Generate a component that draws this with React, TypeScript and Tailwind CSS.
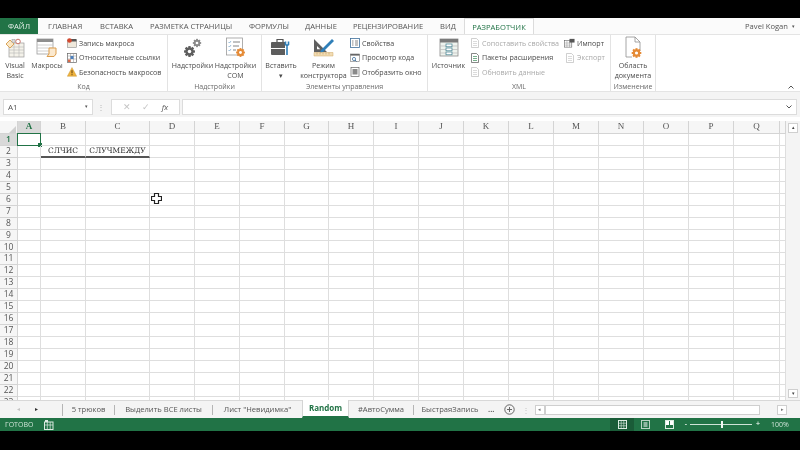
import React from "react";

const colWidths = [18, 23, 45, 64, 45, 45, 45, 44, 45, 45, 45, 45, 45, 45, 45, 45, 45, 46, 6];
const colNames = ["A","B","C","D","E","F","G","H","I","J","K","L","M","N","O","P","Q",""];
const rows = Array.from({ length: 23 }, (_, i) => i + 1);

const IVB = () => (
  <svg width="20" height="20" viewBox="0 0 20 20">
    <rect x="4" y="5" width="15" height="14" fill="#f4f2ea" stroke="#9a9a9a" strokeWidth=".7" />
    <path d="M4 9h15M4 12h15M4 15h15M9 5v14M14 5v14" stroke="#b5b5b5" strokeWidth=".6" />
    <path d="M1 6l4-4 4 4-4 4z" fill="#fbe7c4" stroke="#d9a55c" strokeWidth="1" />
    <circle cx="13" cy="3.5" r="2.3" fill="#fff" stroke="#c9736a" strokeWidth="1" />
    <rect x="7" y="1.5" width="3" height="3" fill="#ddd" stroke="#999" strokeWidth=".5" />
  </svg>
);
const IMacros = () => (
  <svg width="22" height="20" viewBox="0 0 22 20">
    <rect x="1" y="1" width="16" height="15" fill="#fff" stroke="#9c9c9c" strokeWidth=".8" />
    <rect x="1" y="1" width="16" height="3" fill="#8e8e8e" />
    <path d="M1 7h16M1 10h16M1 13h16" stroke="#c4c4c4" strokeWidth=".8" />
    <path d="M13 10h7v6l-2 2.5h-7l2-2.5z" fill="#fbe9cf" stroke="#dc9d4c" strokeWidth="1" />
  </svg>
);
const IRec = () => (
  <svg width="10" height="10" viewBox="0 0 10 10">
    <rect x="0.5" y="2" width="9" height="7.5" fill="#efe9dc" stroke="#8c8c8c" strokeWidth=".6" />
    <rect x="4" y="1" width="5.5" height="2.5" fill="#555" />
    <circle cx="2.5" cy="2.5" r="2.3" fill="#d4492f" />
  </svg>
);
const IRel = () => (
  <svg width="10" height="10" viewBox="0 0 10 10">
    <rect x="0.5" y="0.5" width="9" height="9" fill="#fff" stroke="#666" strokeWidth=".7" />
    <path d="M.5 3h9M.5 6h9M3.5 .5v9M6.5 .5v9" stroke="#8f8f8f" strokeWidth=".5" />
    <rect x="3.5" y="3" width="3" height="3" fill="#4f81bd" />
    <rect x="1" y="6.5" width="2.5" height="2.5" fill="#d9694a" />
  </svg>
);
const IWarn = () => (
  <svg width="10" height="10" viewBox="0 0 10 10">
    <path d="M5 .5l4.7 8.8H.3z" fill="#eeb23e" stroke="#c68f2a" strokeWidth=".4" />
    <path d="M5 3.2v3.2M5 7.2v1" stroke="#5b3d10" strokeWidth="1" />
  </svg>
);
const Gear = ({ cx, cy, r, color }: { cx: number; cy: number; r: number; color: string }) => (
  <g>
    {[0, 45, 90, 135].map((a) => (
      <rect key={a} x={cx - r * 0.28} y={cy - r * 1.3} width={r * 0.56} height={r * 2.6} fill={color} transform={`rotate(${a} ${cx} ${cy})`} />
    ))}
    <circle cx={cx} cy={cy} r={r} fill={color} />
    <circle cx={cx} cy={cy} r={r * 0.42} fill="#fff" />
  </g>
);
const IAddins = () => (
  <svg width="22" height="22" viewBox="0 0 22 22">
    <Gear cx={15} cy={6} r={3.2} color="#8a8a8a" />
    <Gear cx={7.5} cy={14.5} r={4.2} color="#5e5e5e" />
  </svg>
);
const ICom = () => (
  <svg width="22" height="22" viewBox="0 0 22 22">
    <rect x="1.5" y="1" width="16" height="17" fill="#fff" stroke="#9b9b9b" strokeWidth=".8" />
    <path d="M3.5 5l1 1 1.5-2M3.5 9l1 1 1.5-2M3.5 13l1 1 1.5-2" stroke="#6fa0c8" strokeWidth=".7" fill="none" />
    <path d="M8 5h7M8 9h6M8 13h3" stroke="#777" strokeWidth=".9" />
    <Gear cx={15.5} cy={15.5} r={3.4} color="#e58a35" />
  </svg>
);
const IInsert = () => (
  <svg width="22" height="20" viewBox="0 0 22 20">
    <path d="M7 4V1.5h6V4" fill="none" stroke="#555" strokeWidth="1.2" />
    <rect x="1" y="4" width="18" height="13" rx="1" fill="#5d5d5d" />
    <rect x="1" y="10" width="18" height="1" fill="#fff" />
    <path d="M17 3v14" stroke="#fff" strokeWidth="4" />
    <path d="M15.5 3.5v3l1.5 1v9.5M18.5 3.5v3l-1.5 1" stroke="#2f7fb8" strokeWidth="1.6" fill="none" />
  </svg>
);
const IDesign = () => (
  <svg width="24" height="22" viewBox="0 0 24 22">
    <path d="M2 2l13 13H2zM5 9v3.3h3.3z" fill="#5f5f5f" fillRule="evenodd" />
    <path d="M9 13L20 2l2 2L11 15l-3 1z" fill="#2f7fb8" />
    <path d="M2 15.5h19v3.5H2z" fill="#f1dcb4" stroke="#d0a867" strokeWidth=".5" />
    <path d="M5 15.5v2M8 15.5v2M11 15.5v2M14 15.5v2M17 15.5v2" stroke="#b98f4e" strokeWidth=".5" />
  </svg>
);
const IProps = () => (
  <svg width="10" height="10" viewBox="0 0 10 10">
    <rect x=".5" y=".5" width="9" height="9" fill="#fff" stroke="#3f6f9b" strokeWidth=".8" />
    <path d="M2 3h1.5M5 3h3M2 5h1.5M5 5h3M2 7h1.5M5 7h3" stroke="#555" strokeWidth=".7" />
  </svg>
);
const ICode = () => (
  <svg width="10" height="10" viewBox="0 0 10 10">
    <rect x=".5" y="1" width="9" height="7.5" fill="#fff" stroke="#777" strokeWidth=".6" />
    <rect x=".5" y="1" width="9" height="1.6" fill="#666" />
    <circle cx="4" cy="6" r="1.6" fill="none" stroke="#3f6f9b" strokeWidth=".8" />
    <path d="M5 7l1.6 1.6" stroke="#3f6f9b" strokeWidth=".9" />
  </svg>
);
const IDialog = () => (
  <svg width="10" height="10" viewBox="0 0 10 10">
    <rect x="1" y=".5" width="8" height="9" fill="#fff" stroke="#666" strokeWidth=".7" />
    <rect x="2.5" y="2" width="5" height="5.5" fill="#8a8a8a" />
  </svg>
);
const ISource = () => (
  <svg width="20" height="20" viewBox="0 0 20 20">
    <rect x="1" y="1" width="18" height="17" fill="#eef3ee" stroke="#8a8a8a" strokeWidth=".8" />
    <rect x="1" y="1" width="18" height="3.5" fill="#7a7a7a" />
    <path d="M1 8h18M1 11.5h18M1 15h18" stroke="#b9b9b9" strokeWidth=".7" />
    <rect x="7" y="6" width="6" height="2.8" fill="#fff" stroke="#3f7f8f" strokeWidth=".7" />
    <rect x="7" y="10" width="6" height="2.8" fill="#fff" stroke="#3f7f8f" strokeWidth=".7" />
    <rect x="7" y="14" width="6" height="2.8" fill="#fff" stroke="#3f7f8f" strokeWidth=".7" />
  </svg>
);
const ISmallDoc = ({ tone, accent }: { tone: string; accent: string }) => (
  <svg width="10" height="10" viewBox="0 0 10 10">
    <path d="M1.5 .5h5l2 2v7h-7z" fill="#fff" stroke={tone} strokeWidth=".7" />
    <path d="M3 3.5h4M3 5.5h4M3 7.5h4" stroke={accent} strokeWidth=".7" />
  </svg>
);
const IImport = () => (
  <svg width="12" height="10" viewBox="0 0 12 10">
    <rect x=".5" y="2.5" width="8" height="7" fill="#fff" stroke="#555" strokeWidth=".6" />
    <path d="M.5 5h8M.5 7.3h8M3.2 2.5v7M6 2.5v7" stroke="#888" strokeWidth=".5" />
    <rect x="6" y=".5" width="5.5" height="4" fill="#555" />
  </svg>
);
const IPane = () => (
  <svg width="20" height="24" viewBox="0 0 20 24">
    <path d="M3 1h9l5 5v9M3 1v20h6" fill="#fff" stroke="#8f8f8f" strokeWidth=".8" />
    <path d="M12 1v5h5" fill="none" stroke="#8f8f8f" strokeWidth=".8" />
    <Gear cx={13.5} cy={17} r={3.7} color="#e58a35" />
  </svg>
);

function Big({ w, icon, lines, ml }: { w: string; icon: React.ReactNode; lines: string[]; ml?: string }) {
  return (
    <div className={`${w} ${ml ?? ""} flex shrink-0 flex-col items-center`}>
      <div className="flex h-[25px] items-center justify-center">{icon}</div>
      <div className="whitespace-nowrap text-center leading-[10px]">
        {lines.map((l) => (
          <div key={l}>{l}</div>
        ))}
      </div>
    </div>
  );
}

function Small({ icon, label, dim }: { icon: React.ReactNode; label: string; dim?: boolean }) {
  return (
    <div className={`flex h-[14.5px] items-center gap-[2px] whitespace-nowrap ${dim ? "text-[#a9a9a9]" : ""}`}>
      <div className="flex w-[11px] justify-center">{icon}</div>
      <span>{label}</span>
    </div>
  );
}

function Group({ w, label, children }: { w: string; label: string; children: React.ReactNode }) {
  return (
    <div className={`${w} flex h-[56px] shrink-0 flex-col border-r border-[#e3e3e3]`}>
      <div className="flex h-[48px] items-start">{children}</div>
      <div className="text-center text-[7px] leading-[9px] text-[#6a6a6a]">{label}</div>
    </div>
  );
}

const tabs: [string, string][] = [
  ["ГЛАВНАЯ", "ml-[10px] w-[33px]"],
  ["ВСТАВКА", "ml-[19px] w-[32px]"],
  ["РАЗМЕТКА СТРАНИЦЫ", "ml-[18px] w-[81px]"],
  ["ФОРМУЛЫ", "ml-[18px] w-[38px]"],
  ["ДАННЫЕ", "ml-[18px] w-[30px]"],
  ["РЕЦЕНЗИРОВАНИЕ", "ml-[18px] w-[68px]"],
  ["ВИД", "ml-[19px] w-[15px]"],
];

function SheetTab({ label, w, divider = true }: { label: string; w: string; divider?: boolean }) {
  return (
    <div className={`${w} flex h-[10px] shrink-0 items-center justify-center whitespace-nowrap ${divider ? "border-r border-[#b5b5b5]" : ""}`}>
      {label}
    </div>
  );
}

export default function App() {
  return (
    <div
      className="flex h-[450px] w-[800px] flex-col overflow-hidden bg-black text-[7.6px] text-[#444] blur-[0.35px]"
      style={{ fontFamily: '"Open Sans", "Noto Sans", sans-serif' }}
    >
      <div className="h-[18px] shrink-0" />
      <div className="flex h-[413px] shrink-0 flex-col bg-[#f4f4f4]">
        {/* Tabs */}
        <div className="flex h-[16px] shrink-0 items-center bg-[#fbfbfb] pt-[1px] text-[#555]">
          <div className="-mt-[1px] flex h-[16px] w-[38px] items-center justify-center bg-[#217346] pt-[1px] text-[#e8f2ec]">ФАЙЛ</div>
          {tabs.map(([t, c]) => (
            <div key={t} className={`${c} whitespace-nowrap text-center`}>{t}</div>
          ))}
          <div className="-mt-[1px] ml-[9px] flex h-[17px] w-[70px] items-center justify-center self-start border-x border-t border-[#dcdcdc] bg-white pt-[1px] text-[#217346]">
            РАЗРАБОТЧИК
          </div>
          <div className="ml-auto mr-[5px] flex items-center gap-[4px] text-[#555]">
            <span>Pavel Kogan</span>
            <span className="text-[5px]">▾</span>
          </div>
        </div>

        {/* Ribbon */}
        <div className="flex h-[58px] shrink-0 border-y border-[#e4e4e4] bg-white text-[7.1px] text-[#4a4a4a]">
          <Group w="w-[168px]" label="Код">
            <Big w="w-[30px]" icon={<IVB />} lines={["Visual", "Basic"]} />
            <Big w="w-[34px]" icon={<IMacros />} lines={["Макросы"]} />
            <div className="ml-[2px] flex flex-col pt-[1px]">
              <Small icon={<IRec />} label="Запись макроса" />
              <Small icon={<IRel />} label="Относительные ссылки" />
              <Small icon={<IWarn />} label="Безопасность макросов" />
            </div>
          </Group>
          <Group w="w-[94px]" label="Надстройки">
            <Big w="w-[43px]" icon={<IAddins />} lines={["Надстройки"]} ml="ml-[3px]" />
            <Big w="w-[43px]" icon={<ICom />} lines={["Надстройки", "COM"]} />
          </Group>
          <Group w="w-[166px]" label="Элементы управления">
            <Big w="w-[38px]" icon={<IInsert />} lines={["Вставить", "▾"]} />
            <Big w="w-[47px]" icon={<IDesign />} lines={["Режим", "конструктора"]} />
            <div className="ml-[2px] flex flex-col pt-[1px]">
              <Small icon={<IProps />} label="Свойства" />
              <Small icon={<ICode />} label="Просмотр кода" />
              <Small icon={<IDialog />} label="Отобразить окно" />
            </div>
          </Group>
          <Group w="w-[183px]" label="XML">
            <Big w="w-[41px]" icon={<ISource />} lines={["Источник"]} />
            <div className="flex flex-col pt-[1px]">
              <Small dim icon={<ISmallDoc tone="#bbb" accent="#ccc" />} label="Сопоставить свойства" />
              <Small icon={<ISmallDoc tone="#555" accent="#3c8c5a" />} label="Пакеты расширения" />
              <Small dim icon={<ISmallDoc tone="#bbb" accent="#ccc" />} label="Обновить данные" />
            </div>
            <div className="ml-[5px] flex flex-col pt-[1px]">
              <Small icon={<IImport />} label="Импорт" />
              <Small dim icon={<ISmallDoc tone="#bbb" accent="#ccc" />} label="Экспорт" />
            </div>
          </Group>
          <Group w="w-[45px]" label="Изменение">
            <Big w="w-[44px]" icon={<IPane />} lines={["Область", "документа"]} />
          </Group>
          <div className="flex flex-1 items-end justify-end pb-[2px] pr-[6px] text-[6px]">
            <svg width="6" height="4" viewBox="0 0 6 4"><path d="M.5 3.5L3 1l2.5 2.5" stroke="#555" fill="none" /></svg>
          </div>
        </div>

        {/* Formula bar */}
        <div className="flex h-[25px] shrink-0 items-center bg-[#f4f4f4] pt-[5px] text-[#555]">
          <div className="ml-[3px] flex h-[16px] w-[90px] items-center justify-between border border-[#dcdcdc] bg-white px-[4px] text-[8px]">
            <span>A1</span>
            <span className="text-[5px]">▾</span>
          </div>
          <span className="ml-[4px] w-[8px] text-center text-[8px] text-[#b5b5b5]">⋮</span>
          <div className="ml-[6px] flex h-[16px] w-[69px] items-center justify-around border border-[#dcdcdc] bg-white px-[5px] text-[#c4c4c4]">
            <span className="text-[9px]">✕</span>
            <span className="text-[9px]">✓</span>
            <span className="text-[8px] italic text-[#555]">fx</span>
          </div>
          <div className="ml-[2px] flex h-[16px] flex-1 items-center justify-end border border-[#dcdcdc] bg-white pr-[4px]">
            <svg width="6" height="4" viewBox="0 0 6 4"><path d="M.5 .5L3 3l2.5-2.5" stroke="#555" fill="none" /></svg>
          </div>
          <div className="w-[3px]" />
        </div>

        {/* Sheet */}
        <div className="flex h-[283px] shrink-0 overflow-hidden bg-white pt-[4px]">
          <div className="w-[786px] shrink-0 overflow-hidden">
            <div className="flex h-[13px] bg-[#f6f6f6] text-[9px] text-[#555]" style={{ fontFamily: '"Liberation Serif", serif' }}>
              {colWidths.map((w, i) => (
                <div
                  key={i}
                  style={{ width: w }}
                  className={`flex shrink-0 items-center justify-center border-b border-r border-[#d4d4d4] ${i === 1 ? "bg-[#d9d9d9] border-b-[#217346] font-semibold text-[#217346]" : ""}`}
                >
                  {i === 0 ? (
                    <svg width="7" height="7" viewBox="0 0 7 7" className="ml-[8px] mt-[4px]"><path d="M7 0v7H0z" fill="#d0d0d0" /></svg>
                  ) : (
                    colNames[i - 1]
                  )}
                </div>
              ))}
            </div>
            {rows.map((r) => (
              <div key={r} className="flex h-[11.95px]">
                {colWidths.map((w, i) => {
                  const isHead = i === 0;
                  const active = r === 1;
                  const under = r === 2 && (i === 2 || i === 3);
                  return (
                    <div
                      key={i}
                      style={{ width: w }}
                      className={`relative flex shrink-0 items-center justify-center whitespace-nowrap border-b border-r text-[8.5px] ${
                        isHead
                          ? `border-[#d4d4d4] ${active ? "bg-[#d9d9d9] font-semibold text-[#217346]" : "bg-[#f6f6f6] text-[#555]"}`
                          : "border-[#dedede]"
                      } ${under ? "border-b-[#555] border-b-[2px] text-[#333]" : ""}`}
                    >
                      {isHead ? r : null}
                      {r === 2 && i === 2 ? <span style={{ fontFamily: '"DejaVu Serif", serif' }} className="text-[7.5px]">СЛЧИС</span> : null}
                      {r === 2 && i === 3 ? <span style={{ fontFamily: '"DejaVu Serif", serif' }} className="text-[7.5px]">СЛУЧМЕЖДУ</span> : null}
                      {r === 1 && i === 1 ? (
                        <div className="absolute -bottom-[1px] -left-[1px] -right-[1px] -top-[1px] border-[1.5px] border-[#217346]">
                          <div className="absolute -bottom-[2px] -right-[2px] h-[4px] w-[4px] bg-[#217346]" />
                        </div>
                      ) : null}
                      {r === 6 && i === 3 ? (
                        <svg width="11" height="11" viewBox="0 0 11 11" className="absolute -right-[13px] -top-[1px] z-10">
                          <path d="M3.5 .5h4v3h3v4h-3v3h-4v-3h-3v-4h3z" fill="#fff" stroke="#222" strokeWidth="1.2" />
                        </svg>
                      ) : null}
                    </div>
                  );
                })}
              </div>
            ))}
          </div>
          <div className="flex flex-1 flex-col items-center justify-between bg-[#f4f4f4] pb-[2px] pt-[2px]">
            <div className="flex h-[10px] w-[10px] items-center justify-center border border-[#cfcfcf] bg-white text-[5px]">▴</div>
            <div className="flex h-[9px] w-[10px] items-center justify-center border border-[#cfcfcf] bg-white text-[5px]">▾</div>
          </div>
        </div>

        {/* Sheet tabs */}
        <div className="flex h-[18px] shrink-0 items-center border-t border-[#d8d8d8] bg-[#f4f4f4] text-[7.6px] text-[#555]">
          <span className="ml-[17px] text-[6px] text-[#c4c4c4]">◂</span>
          <span className="ml-[15px] text-[6px] text-[#333]">▸</span>
          <div className="ml-[24px] h-[12px] w-px bg-[#b5b5b5]" />
          <SheetTab label="5 трюков" w="w-[52px]" />
          <SheetTab label="Выделить ВСЕ листы" w="w-[98px]" />
          <SheetTab label={'Лист "Невидимка"'} w="w-[89px]" divider={false} />
          <div className="-mt-[2px] flex h-[18px] w-[47px] shrink-0 items-center justify-center border-x border-b-2 border-[#d4d4d4] border-b-[#217346] bg-white text-[8px] font-bold text-[#217346]">
            Random
          </div>
          <SheetTab label="#АвтоСумма" w="w-[65px]" />
          <SheetTab label="БыстраяЗапись" w="w-[72px]" divider={false} />
          <span className="ml-[2px] font-bold">...</span>
          <svg width="11" height="11" viewBox="0 0 11 11" className="ml-[9px]">
            <circle cx="5.5" cy="5.5" r="4.7" fill="none" stroke="#666" strokeWidth="1" />
            <path d="M5.5 3v5M3 5.5h5" stroke="#666" strokeWidth="1" />
          </svg>
          <span className="ml-[7px] text-[8px] text-[#c4c4c4]">⋮</span>
          <div className="ml-[5px] flex h-[10px] w-[10px] items-center justify-center border border-[#cfcfcf] bg-white text-[5px] text-[#777]">◂</div>
          <div className="h-[10px] w-[215px] border border-[#cfcfcf] bg-white" />
          <div className="ml-auto mr-[13px] flex h-[10px] w-[10px] items-center justify-center border border-[#cfcfcf] bg-white text-[5px] text-[#777]">▸</div>
        </div>

        {/* Status */}
        <div className="flex h-[13px] shrink-0 items-center bg-[#217346] text-[7px] text-[#cfe3d7]">
          <span className="ml-[5px] w-[39px] pt-[1px]">ГОТОВО</span>
          <svg width="10" height="10" viewBox="0 0 10 10">
            <rect x=".5" y="2" width="8.5" height="7.5" fill="none" stroke="#dcebe2" />
            <path d="M.5 5h8.5M3.3 2v7M6.2 2v7" stroke="#dcebe2" strokeWidth=".7" />
            <rect x="1" y="0" width="3" height="2" fill="#dcebe2" />
          </svg>
          <div className="ml-auto flex h-[13px] items-center">
            <div className="flex h-[13px] w-[24px] items-center justify-center bg-[#1a5c38]">
              <svg width="9" height="9" viewBox="0 0 9 9"><rect x=".5" y=".5" width="8" height="8" fill="none" stroke="#dcebe2" /><path d="M.5 3.2h8M.5 5.8h8M3.2 .5v8M5.8 .5v8" stroke="#dcebe2" strokeWidth=".6" /></svg>
            </div>
            <div className="ml-[1px] w-[20px] text-center">
              <svg width="9" height="9" viewBox="0 0 9 9" className="mx-auto"><rect x=".5" y=".5" width="8" height="8" fill="none" stroke="#b9d3c4" /><rect x="2.5" y="2" width="4" height="5" fill="#8fb6a1" /></svg>
            </div>
            <div className="ml-[4px] w-[20px]">
              <svg width="9" height="9" viewBox="0 0 9 9" className="mx-auto"><rect x=".5" y=".5" width="8" height="8" fill="none" stroke="#dcebe2" /><rect x="1" y="1" width="3" height="4" fill="#fff" /><rect x="5" y="1" width="3" height="4" fill="#fff" /></svg>
            </div>
            <span className="ml-[4px] w-[6px] text-center font-bold">-</span>
            <div className="relative mx-[1px] h-px w-[62px] bg-[#cfe3d7]">
              <div className="absolute -top-[3px] left-[31px] h-[7px] w-[2px] bg-[#f2f7f4]" />
            </div>
            <span className="ml-[1px] w-[8px] text-center font-bold">+</span>
            <span className="ml-[9px] w-[17px] whitespace-nowrap pt-[1px]">100%</span>
            <div className="w-[12px]" />
          </div>
        </div>
      </div>
      <div className="flex-1" />
    </div>
  );
}
